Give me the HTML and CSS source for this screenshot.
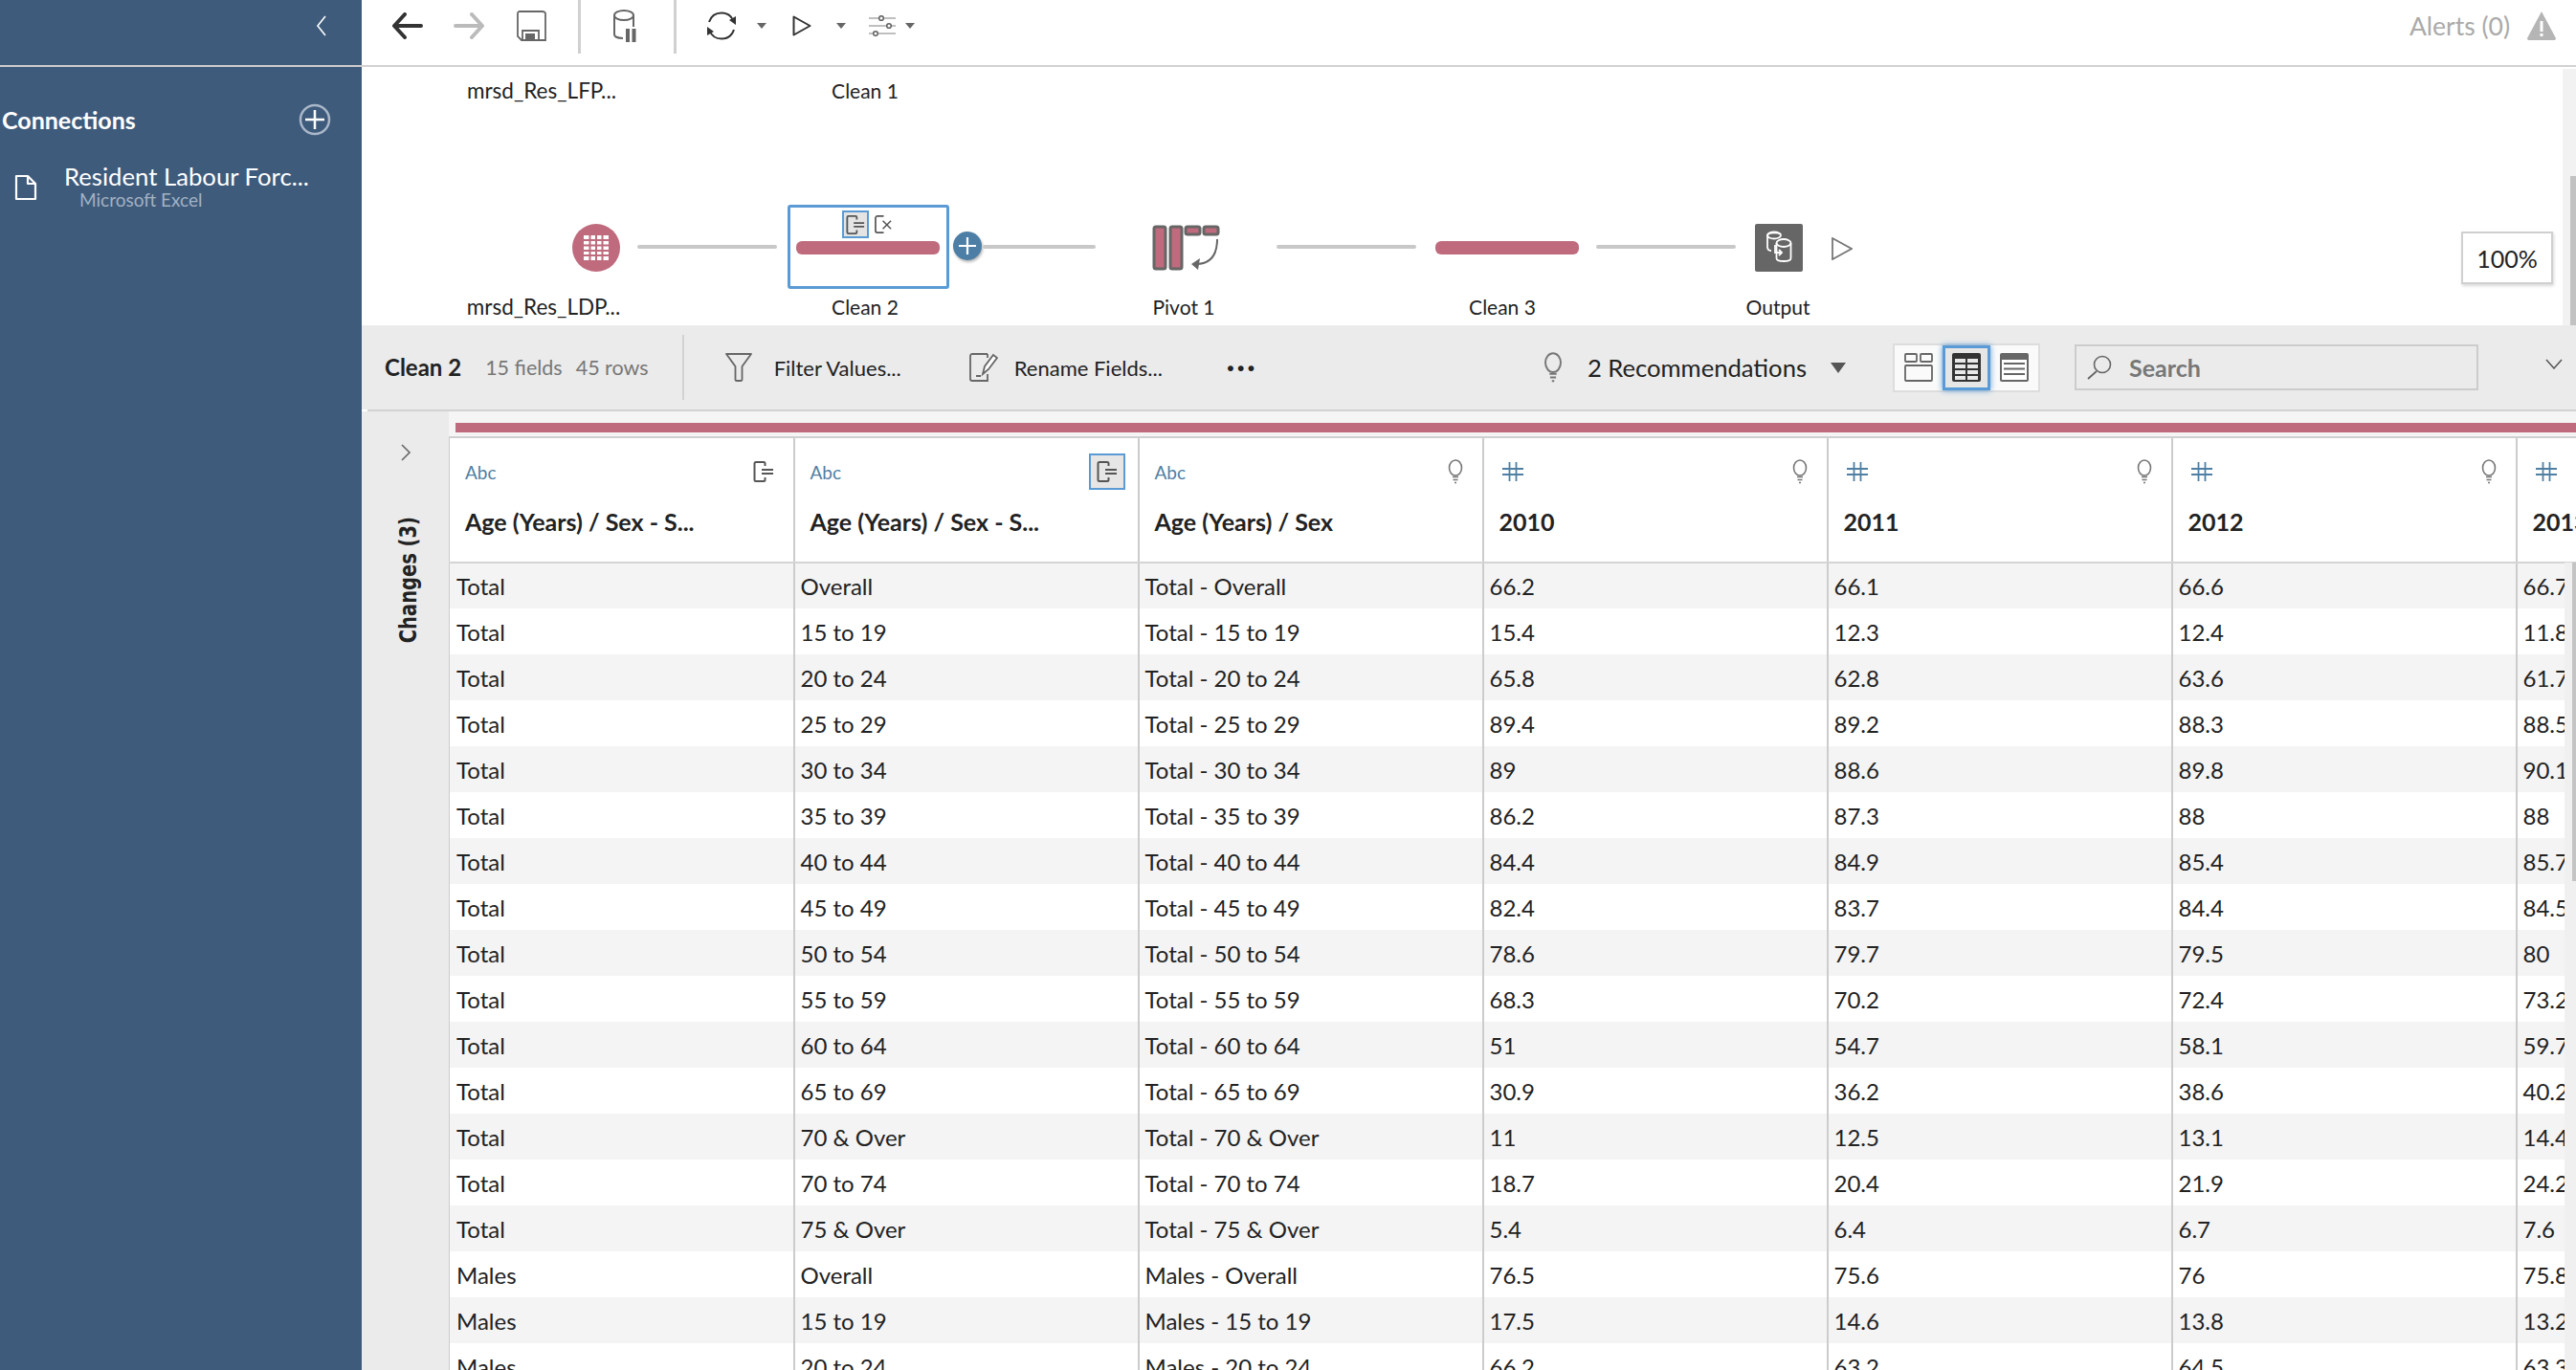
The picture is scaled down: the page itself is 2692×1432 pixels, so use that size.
FILE: index.html
```html
<!DOCTYPE html>
<html lang="en">
<head>
  <meta charset="UTF-8" />
  <title>Clean 2</title>
  <link rel="stylesheet" href="styles.css">
</head>
<body>

<svg class="defs" width="0" height="0">
  <symbol id="i-bulb" viewBox="0 0 16 26">
    <ellipse cx="8" cy="9" rx="6.500" ry="8" fill="none" stroke="#777" stroke-width="1.600"/>
    <path d="M5 18.500H11M5.500 21.500H10.500M7 24.500H9" stroke="#777" stroke-width="1.600"/>
  </symbol>
  <symbol id="i-keep" viewBox="0 0 22 22">
    <path d="M11 1H3C2 1 1.500 1.500 1.500 2.500V19.500C1.500 20.500 2 21 3 21H11C12 21 12.500 20.500 12.500 19.500V17M12.500 5V2.500C12.500 1.500 12 1 11 1" fill="none" stroke="#555" stroke-width="2"/>
    <path d="M9 9H21M9 13H21" stroke="#555" stroke-width="2"/>
  </symbol>
  <symbol id="i-hash" viewBox="0 0 22 20">
    <path d="M7.500 0V20M14.500 0V20M0 7H22M0 13H22" stroke="#4f7fa3" stroke-width="1.800"/>
  </symbol>
</svg>

<aside class="sidebar">
  <div class="side-head">
    <svg class="side-back" viewBox="0 0 12 24"><path d="M10 2L2 12L10 22" fill="none" stroke="#fff" stroke-width="1.600"/></svg>
  </div>
  <div class="conn-head">
    <span>Connections</span>
    <svg class="conn-add" viewBox="0 0 34 34"><circle cx="17" cy="17" r="15" fill="none" stroke="#a9b7c8" stroke-width="2.500"/><path d="M17 7V27M7 17H27" stroke="#fff" stroke-width="2.500"/></svg>
  </div>
  <div class="conn-row">
    <svg class="conn-file" viewBox="0 0 24 28"><path d="M2 2H14L22 10V26H2Z M14 2V10H22" fill="none" stroke="#fff" stroke-width="2.200" stroke-linejoin="round"/></svg>
    <div>
      <div class="conn-name">Resident Labour Forc...</div>
      <div class="conn-type">Microsoft Excel</div>
    </div>
  </div>
</aside>

<main class="main">
  <header class="toolbar">
    <svg class="t-back" viewBox="0 0 32 28"><path d="M30 14H3M13 2L2 14L13 26" fill="none" stroke="#333" stroke-width="4" stroke-linecap="round" stroke-linejoin="round"/></svg>
    <svg class="t-fwd" viewBox="0 0 32 28"><path d="M2 14H29M19 2L30 14L19 26" fill="none" stroke="#bbb" stroke-width="4" stroke-linecap="round" stroke-linejoin="round"/></svg>
    <svg class="t-save" viewBox="0 0 32 32"><path d="M2 3C2 2 3 1 4 1H28C29 1 31 2 31 3V31H6L2 27Z M7 31V21H24V31" fill="none" stroke="#666" stroke-width="1.800"/><rect x="10" y="24" width="10" height="7" fill="#666"/></svg>
    <span class="t-sep"></span>
    <svg class="t-data" viewBox="0 0 24 34"><ellipse cx="11" cy="6" rx="10" ry="5" fill="none" stroke="#666" stroke-width="2"/><path d="M1 6V26C1 28 4 30 10 30M21 6V18" fill="none" stroke="#666" stroke-width="2"/><rect x="13" y="20" width="4" height="14" fill="#666"/><rect x="19.500" y="20" width="4" height="14" fill="#666"/></svg>
    <span class="t-sep t-sep2"></span>
    <svg class="t-refresh" viewBox="0 0 32 30"><path d="M3 11C5 5 10 1.500 16 1.500C22 1.500 26.500 5 28.500 10M29 19C27 25 22 28.500 16 28.500C10 28.500 5.500 25 3.500 20" fill="none" stroke="#333" stroke-width="2"/><path d="M24 9L31 5V14Z M8 21L1 25V16Z" fill="#333"/></svg>
    <i class="caret t-c1"></i>
    <svg class="t-play" viewBox="0 0 20 22"><path d="M1.500 1.500L18.500 11L1.500 20.500Z" fill="none" stroke="#333" stroke-width="2" stroke-linejoin="round"/></svg>
    <i class="caret t-c2"></i>
    <svg class="t-sliders" viewBox="0 0 28 22"><path d="M0 3H28M0 11H28M0 19H28" stroke="#aaa" stroke-width="1.600"/><circle cx="13" cy="3" r="2.300" fill="#fff" stroke="#666" stroke-width="1.600"/><circle cx="21" cy="11" r="2.300" fill="#fff" stroke="#666" stroke-width="1.600"/><circle cx="7" cy="19" r="2.300" fill="#fff" stroke="#666" stroke-width="1.600"/></svg>
    <i class="caret t-c3"></i>
    <span class="alerts">Alerts (0)</span>
    <svg class="t-warn" viewBox="0 0 30 30"><path d="M15 0L30 28C30 29.500 29 30 28 30H2C1 30 0 29.500 0 28Z" fill="#b5b5b5"/><rect x="13.500" y="10" width="3" height="11" fill="#fff"/><rect x="13.500" y="23" width="3" height="3" fill="#fff"/></svg>
  </header>

  <section class="flow">
    <span class="flow-label label-lfp">mrsd_Res_LFP...</span>
    <span class="flow-label label-c1">Clean 1</span>

    <div class="node-source">
      <svg viewBox="0 0 26 26" width="26" height="26"><path d="M0 0H26V26H0Z" fill="#fff"/><path d="M6.500 0V26M13 0V26M19.500 0V26M0 5H26M0 10.500H26M0 16H26M0 21H26" stroke="#bf6b7d" stroke-width="2"/></svg>
    </div>
    <span class="link link-1"></span>
    <div class="node-selected">
      <div class="node-actions">
        <span class="action-on"><svg width="20" height="20"><use href="#i-keep"/></svg></span>
        <svg class="action-x" viewBox="0 0 20 20"><path d="M10 1H3C2 1 1 2 1 3V17C1 18 2 19 3 19H10" fill="none" stroke="#555" stroke-width="1.800"/><path d="M9 6L18 15M18 6L9 15" stroke="#555" stroke-width="1.600"/></svg>
      </div>
      <div class="pill"></div>
    </div>
    <div class="node-add"><svg viewBox="0 0 30 30"><path d="M15 6V24M6 15H24" stroke="#fff" stroke-width="2.200"/></svg></div>
    <span class="link link-2"></span>
    <svg class="node-pivot" viewBox="0 0 72 48">
      <rect x="2" y="2" width="12" height="44" rx="2" fill="#bf6b7d" stroke="#666" stroke-width="3"/>
      <rect x="19" y="2" width="12" height="44" rx="2" fill="#bf6b7d" stroke="#666" stroke-width="3"/>
      <rect x="35" y="2" width="15" height="8" rx="2" fill="#bf6b7d" stroke="#666" stroke-width="3"/>
      <rect x="54" y="2" width="15" height="8" rx="2" fill="#bf6b7d" stroke="#666" stroke-width="3"/>
      <path d="M68 15C68 32 60 40 48 41" fill="none" stroke="#666" stroke-width="2"/>
      <path d="M41 41L50 35L48 47Z" fill="#666"/>
    </svg>
    <span class="link link-3"></span>
    <div class="pill pill-3"></div>
    <span class="link link-4"></span>
    <div class="node-output">
      <svg viewBox="0 0 50 50" width="50" height="50" fill="none" stroke="#fff" stroke-width="1.800">
        <path d="M27 11C25 9 14 8 13 12V24C13 27 15 28 17 28"/>
        <ellipse cx="20" cy="12" rx="7" ry="3.500"/>
        <ellipse cx="30" cy="20" rx="7.500" ry="4"/>
        <path d="M22.500 20V36C22.500 40 37.500 40 37.500 36V20"/>
        <path d="M21 22V30H28M25 27L28 30L25 33"/>
      </svg>
    </div>
    <svg class="node-run" viewBox="0 0 22 24"><path d="M1 1L21 12L1 23Z" fill="none" stroke="#777" stroke-width="1.800"/></svg>

    <span class="flow-label flow-file label-ldp">mrsd_Res_LDP...</span>
    <span class="flow-label label-c2">Clean 2</span>
    <span class="flow-label label-pivot">Pivot 1</span>
    <span class="flow-label label-c3">Clean 3</span>
    <span class="flow-label label-out">Output</span>

    <div class="zoom-box">100%</div>
    <div class="flow-scroll"><div class="flow-thumb"></div></div>
  </section>

  <section class="profile-bar">
    <b class="step-name">Clean 2</b>
    <span class="step-meta">15 fields</span>
    <span class="step-meta step-rows">45 rows</span>
    <span class="bar-sep"></span>
    <svg class="bar-funnel" viewBox="0 0 28 30"><path d="M1 1H27L17.500 14V28C17.500 29 16.500 29 16 29H12C11.500 29 10.500 29 10.500 28V14Z" fill="none" stroke="#666" stroke-width="1.800" stroke-linejoin="round"/></svg>
    <span class="bar-link">Filter Values...</span>
    <svg class="bar-rename" viewBox="0 0 30 30"><path d="M19 1H3C2 1 1 2 1 3V27C1 28 2 29 3 29H19V22M19 5V1" fill="none" stroke="#666" stroke-width="1.800"/><path d="M14 22L16 14L25 2L29 5L20 17Z M7 24H12" fill="#fff" stroke="#666" stroke-width="1.800"/></svg>
    <span class="bar-link">Rename Fields...</span>
    <span class="bar-more">···</span>

    <svg class="bar-bulb"><use href="#i-bulb"/></svg>
    <span class="bar-recs">2 Recommendations</span>
    <i class="caret caret-big"></i>
    <div class="view-switch">
      <span class="view-btn">
        <svg width="30" height="30" viewBox="0 0 30 30" fill="none" stroke="#666" stroke-width="1.800"><rect x="1" y="1" width="12" height="8" rx="1"/><rect x="17" y="1" width="12" height="8" rx="1"/><rect x="1" y="13" width="28" height="16" rx="1"/></svg>
      </span>
      <span class="view-btn view-on">
        <svg width="30" height="30" viewBox="0 0 30 30"><rect width="30" height="30" rx="2" fill="#333"/><path d="M3 6H14V10H3Z M16 6H27V10H16Z M3 12H14V16H3Z M16 12H27V16H16Z M3 18H14V22H3Z M16 18H27V22H16Z M3 24H14V28H3Z M16 24H27V28H16Z" fill="#e8e8e8"/></svg>
      </span>
      <span class="view-btn">
        <svg width="30" height="30" viewBox="0 0 30 30"><rect width="30" height="30" rx="2" fill="#666"/><rect x="2" y="7" width="26" height="21" fill="#fff"/><path d="M4 11H26M4 16.500H26M4 22H26" stroke="#666" stroke-width="1.800"/></svg>
      </span>
    </div>
    <div class="search">
      <svg viewBox="0 0 26 26"><circle cx="16" cy="10" r="8.500" fill="none" stroke="#666" stroke-width="1.600"/><path d="M10 17L1 25" stroke="#666" stroke-width="1.800"/></svg>
      <span>Search</span>
    </div>
    <svg class="bar-collapse" viewBox="0 0 18 11"><path d="M1 1L9 10L17 1" fill="none" stroke="#555" stroke-width="1.500"/></svg>
  </section>

  <div class="bar-rule"></div>

  <section class="lower">
    <div class="changes">
      <svg class="changes-open" viewBox="0 0 12 18"><path d="M2 1L10 9L2 17" fill="none" stroke="#666" stroke-width="1.600"/></svg>
      <span class="changes-label">Changes (3)</span>
    </div>
    <div class="grid-wrap">
      <div class="step-strip"><div class="step-color"></div></div>
      <table class="grid">
        <thead>
          <tr>
            <th><div class="th-top"><span class="type">Abc</span><svg class="th-keep"><use href="#i-keep"/></svg></div><div class="th-name">Age (Years) / Sex - S...</div></th>
            <th><div class="th-top"><span class="type">Abc</span><span class="th-keep-on"><svg class="th-keep-icon"><use href="#i-keep"/></svg></span></div><div class="th-name">Age (Years) / Sex - S...</div></th>
            <th><div class="th-top"><span class="type">Abc</span><svg class="th-bulb"><use href="#i-bulb"/></svg></div><div class="th-name">Age (Years) / Sex</div></th>
            <th><div class="th-top"><svg class="th-hash"><use href="#i-hash"/></svg><svg class="th-bulb"><use href="#i-bulb"/></svg></div><div class="th-name">2010</div></th>
            <th><div class="th-top"><svg class="th-hash"><use href="#i-hash"/></svg><svg class="th-bulb"><use href="#i-bulb"/></svg></div><div class="th-name">2011</div></th>
            <th><div class="th-top"><svg class="th-hash"><use href="#i-hash"/></svg><svg class="th-bulb"><use href="#i-bulb"/></svg></div><div class="th-name">2012</div></th>
            <th><div class="th-top"><svg class="th-hash"><use href="#i-hash"/></svg></div><div class="th-name">2013</div></th>
          </tr>
        </thead>
        <tbody>
          <tr><td>Total</td><td>Overall</td><td>Total - Overall</td><td>66.2</td><td>66.1</td><td>66.6</td><td>66.7</td></tr>
          <tr><td>Total</td><td>15 to 19</td><td>Total - 15 to 19</td><td>15.4</td><td>12.3</td><td>12.4</td><td>11.8</td></tr>
          <tr><td>Total</td><td>20 to 24</td><td>Total - 20 to 24</td><td>65.8</td><td>62.8</td><td>63.6</td><td>61.7</td></tr>
          <tr><td>Total</td><td>25 to 29</td><td>Total - 25 to 29</td><td>89.4</td><td>89.2</td><td>88.3</td><td>88.5</td></tr>
          <tr><td>Total</td><td>30 to 34</td><td>Total - 30 to 34</td><td>89</td><td>88.6</td><td>89.8</td><td>90.1</td></tr>
          <tr><td>Total</td><td>35 to 39</td><td>Total - 35 to 39</td><td>86.2</td><td>87.3</td><td>88</td><td>88</td></tr>
          <tr><td>Total</td><td>40 to 44</td><td>Total - 40 to 44</td><td>84.4</td><td>84.9</td><td>85.4</td><td>85.7</td></tr>
          <tr><td>Total</td><td>45 to 49</td><td>Total - 45 to 49</td><td>82.4</td><td>83.7</td><td>84.4</td><td>84.5</td></tr>
          <tr><td>Total</td><td>50 to 54</td><td>Total - 50 to 54</td><td>78.6</td><td>79.7</td><td>79.5</td><td>80</td></tr>
          <tr><td>Total</td><td>55 to 59</td><td>Total - 55 to 59</td><td>68.3</td><td>70.2</td><td>72.4</td><td>73.2</td></tr>
          <tr><td>Total</td><td>60 to 64</td><td>Total - 60 to 64</td><td>51</td><td>54.7</td><td>58.1</td><td>59.7</td></tr>
          <tr><td>Total</td><td>65 to 69</td><td>Total - 65 to 69</td><td>30.9</td><td>36.2</td><td>38.6</td><td>40.2</td></tr>
          <tr><td>Total</td><td>70 &amp; Over</td><td>Total - 70 &amp; Over</td><td>11</td><td>12.5</td><td>13.1</td><td>14.4</td></tr>
          <tr><td>Total</td><td>70 to 74</td><td>Total - 70 to 74</td><td>18.7</td><td>20.4</td><td>21.9</td><td>24.2</td></tr>
          <tr><td>Total</td><td>75 &amp; Over</td><td>Total - 75 &amp; Over</td><td>5.4</td><td>6.4</td><td>6.7</td><td>7.6</td></tr>
          <tr><td>Males</td><td>Overall</td><td>Males - Overall</td><td>76.5</td><td>75.6</td><td>76</td><td>75.8</td></tr>
          <tr><td>Males</td><td>15 to 19</td><td>Males - 15 to 19</td><td>17.5</td><td>14.6</td><td>13.8</td><td>13.2</td></tr>
          <tr><td>Males</td><td>20 to 24</td><td>Males - 20 to 24</td><td>66.2</td><td>63.2</td><td>64.5</td><td>63.3</td></tr>
        </tbody>
      </table>
      <div class="grid-scroll"><div class="grid-thumb"></div></div>
    </div>
  </section>
</main>

</body>
</html>
```

FILE: styles.css
```css
* {
  box-sizing: border-box;
}

body {
  margin: 0;
  display: flex;
  width: 2692px;
  height: 1432px;
  overflow: hidden;
  font-family: "Lato", sans-serif;
  font-size: 24px;
  color: #222;
  background-color: #fff;
}

svg {
  display: block;
  flex: none;
}

.defs {
  position: absolute;
}

/* sidebar */
.sidebar {
  width: 378px;
  flex: none;
  background-color: #3e5b7c;
  color: white;
}

.side-head {
  height: 70px;
  border-bottom: 2px solid #ccc;
  display: flex;
  align-items: center;
  justify-content: flex-end;
  padding: 0 36px 14px 0;
}

.side-back {
  width: 12px;
  height: 24px;
}

.conn-head {
  display: flex;
  align-items: center;
  justify-content: space-between;
  padding: 38px 32px 0 2px;
  font-size: 25px;
  font-weight: 700;
}

.conn-add {
  width: 34px;
  height: 34px;
}

.conn-row {
  display: flex;
  align-items: center;
  gap: 28px;
  padding: 27px 0 0 15px;
}

.conn-file {
  width: 24px;
  height: 28px;
  margin-top: 4px;
}

.conn-name {
  font-size: 25.700px;
  line-height: 30px;
}

.conn-type {
  font-size: 19px;
  line-height: 20px;
  margin-left: 16px;
  color: #a3b1c2;
}

/* right side */
.main {
  width: 2314px;
  display: flex;
  flex-direction: column;
}

.toolbar {
  height: 70px;
  flex: none;
  border-bottom: 2px solid #d2d2d2;
  display: flex;
  align-items: center;
  padding: 0 21px 14px 32px;
}

.t-back { width: 32px; height: 28px; }
.t-fwd { width: 32px; height: 28px; margin-left: 32px; }
.t-save { width: 32px; height: 32px; margin-left: 33px; }
.t-data { width: 24px; height: 34px; margin-left: 34px; }
.t-refresh { width: 32px; height: 30px; margin-left: 31px; }
.t-play { width: 20px; height: 22px; margin-left: 27px; }
.t-sliders { width: 28px; height: 22px; margin-left: 24px; }
.t-c1 { margin-left: 21px; }
.t-c2 { margin-left: 26px; }
.t-c3 { margin-left: 10px; }

.t-sep {
  width: 3px;
  height: 56px;
  margin-left: 33px;
  background-color: #d0d0d0;
  align-self: flex-start;
}

.t-sep2 {
  margin-left: 39px;
}

.caret {
  display: block;
  flex: none;
  width: 0;
  height: 0;
  border-left: 5px solid transparent;
  border-right: 5px solid transparent;
  border-top: 6px solid #666;
}

.alerts {
  margin-left: auto;
  font-size: 26.500px;
  color: #aaa;
}

.t-warn {
  width: 30px;
  height: 30px;
  margin-left: 18px;
}

/* flow canvas, nodes sit where the diagram puts them */
.flow {
  position: relative;
  height: 270px;
  flex: none;
}

.flow-label {
  position: absolute;
  transform: translateX(-50%);
  font-size: 21px;
  line-height: 26px;
  white-space: nowrap;
}

.label-lfp,
.flow-file {
  font-size: 22.500px;
}

.label-lfp { left: 188px; top: 12px; }
.label-c1 { left: 526px; top: 12px; }
.label-ldp { left: 190px; top: 238px; }
.label-c2 { left: 526px; top: 238px; }
.label-pivot { left: 859px; top: 238px; }
.label-c3 { left: 1192px; top: 238px; }
.label-out { left: 1480px; top: 238px; }

.node-source {
  position: absolute;
  left: 220px;
  top: 164px;
  width: 50px;
  height: 50px;
  border-radius: 50%;
  background-color: #bf6b7d;
  display: flex;
  align-items: center;
  justify-content: center;
}

.link {
  position: absolute;
  top: 186px;
  width: 146px;
  height: 4px;
  border-radius: 2px;
  background-color: #c8c8c8;
}

.link-1 { left: 288px; }
.link-2 { left: 649px; width: 118px; }
.link-3 { left: 956px; }
.link-4 { left: 1290px; }

.node-selected {
  position: absolute;
  left: 445px;
  top: 144px;
  width: 169px;
  height: 88px;
  border: 3px solid #5b9bd5;
  border-radius: 3px;
  padding: 3px 6px 0;
}

.node-actions {
  display: flex;
  align-items: center;
  justify-content: center;
  gap: 6px;
  height: 29px;
  margin: 0 3px 3px 0;
}

.action-on {
  width: 28px;
  height: 29px;
  background-color: #e4e4e4;
  border: 2px solid #5b9bd5;
  display: flex;
  align-items: center;
  justify-content: center;
}

.action-x {
  width: 19px;
  height: 19px;
}

.pill {
  width: 150px;
  height: 14px;
  border-radius: 6px;
  background-color: #bf6b7d;
}

.pill-3 {
  position: absolute;
  left: 1122px;
  top: 182px;
}

.node-add {
  position: absolute;
  left: 618px;
  top: 172px;
  width: 30px;
  height: 30px;
  border-radius: 50%;
  background-color: #4d7fa6;
  box-shadow: 1px 2px 3px rgba(0, 0, 0, 0.3);
}

.node-pivot {
  position: absolute;
  left: 826px;
  top: 165px;
  width: 72px;
  height: 48px;
}

.node-output {
  position: absolute;
  left: 1456px;
  top: 164px;
  width: 50px;
  height: 50px;
  border-radius: 2px;
  background-color: #666;
}

.node-run {
  position: absolute;
  left: 1536px;
  top: 178px;
  width: 22px;
  height: 24px;
}

.zoom-box {
  position: absolute;
  left: 2194px;
  top: 172px;
  width: 96px;
  height: 55px;
  border: 2px solid #d0d0d0;
  background-color: #fff;
  box-shadow: 1px 2px 3px rgba(0, 0, 0, 0.15);
  display: flex;
  align-items: center;
  justify-content: center;
  font-size: 25px;
}

.flow-scroll {
  position: absolute;
  right: 0;
  top: 2px;
  bottom: 0;
  width: 14px;
  background-color: #f2f2f2;
  display: flex;
  justify-content: flex-end;
  align-items: flex-end;
}

.flow-thumb {
  width: 6px;
  height: 156px;
  background-color: #c2c2c2;
}

/* bar above the grid */
.profile-bar {
  height: 88px;
  flex: none;
  background-color: #ebebeb;
  display: flex;
  align-items: center;
  padding: 0 14px 0 24px;
}

.step-name {
  font-weight: 700;
  margin-top: -2px;
}

.step-meta {
  margin-left: 25px;
  font-size: 21.500px;
  color: #777;
}

.step-rows {
  margin-left: 14px;
}

.bar-sep {
  width: 2px;
  height: 68px;
  margin-left: 35px;
  background-color: #d2d2d2;
}

.bar-funnel {
  width: 28px;
  height: 30px;
  margin-left: 43px;
}

.bar-link {
  margin-left: 23px;
  font-size: 22px;
}

.bar-rename {
  width: 30px;
  height: 30px;
  margin-left: 71px;
}

.bar-rename + .bar-link {
  margin-left: 17px;
}

.bar-more {
  margin-left: 67px;
  margin-top: -3px;
  font-weight: 900;
  font-size: 28px;
  letter-spacing: 3px;
}

.bar-bulb {
  width: 24px;
  height: 32px;
  margin-left: auto;
}

.bar-recs {
  margin-left: 24px;
  font-size: 25.600px;
}

.caret-big {
  margin-left: 25px;
  border-left-width: 8px;
  border-right-width: 8px;
  border-top: 11px solid #555;
}

.view-switch {
  display: flex;
  margin-left: 49px;
  width: 154px;
  height: 51px;
  border: 2px solid #ddd;
  background-color: #fafafa;
}

.view-btn {
  width: 50px;
  display: flex;
  align-items: center;
  justify-content: center;
}

.view-on {
  background-color: #e6e6e6;
  border: 3px solid #5b9bd5;
  box-shadow: 0 0 6px #5b9bd5;
}

.search {
  display: flex;
  align-items: center;
  gap: 18px;
  margin-left: 36px;
  width: 422px;
  height: 48px;
  padding-left: 11px;
  border: 2px solid #ccc;
  font-size: 25px;
  font-weight: 700;
  color: #777;
}

.search svg {
  width: 26px;
  height: 26px;
}

.bar-collapse {
  width: 18px;
  height: 11px;
  margin: -8px 0 0 70px;
}

.bar-rule {
  height: 2px;
  flex: none;
  margin-left: 6px;
  background-color: #d2d2d2;
}

/* lower part */
.lower {
  flex: 1;
  display: flex;
  min-height: 0;
  background-color: #ebebeb;
}

.changes {
  width: 91px;
  flex: none;
  padding-top: 34px;
  display: flex;
  flex-direction: column;
  align-items: center;
  gap: 58px;
}

.changes-open {
  width: 12px;
  height: 18px;
}

.changes-label {
  writing-mode: vertical-rl;
  transform: rotate(180deg) scaleX(1.250);
  margin-left: 6px;
  font-family: "DejaVu Sans", sans-serif;
  font-weight: 700;
  font-size: 19.500px;
}

.grid-wrap {
  position: relative;
  flex: 1;
  overflow: hidden;
  background-color: #fff;
}

.step-strip {
  height: 28px;
  padding-top: 12px;
  padding-left: 7px;
  background-color: #f5f5f5;
  border-bottom: 2px solid #d0d0d0;
}

.step-color {
  height: 10px;
  background-color: #bf6b7d;
}

.grid {
  width: 2521px;
  table-layout: fixed;
  border-collapse: collapse;
  border-left: 1px solid #ccc;
  font-size: 24px;
}

.grid th,
.grid td {
  width: 360px;
  padding: 0 7px 0 6px;
  border-right: 2px solid #ccc;
  text-align: left;
  white-space: nowrap;
  overflow: hidden;
}

.grid td:first-child {
  padding-left: 7px;
}

.grid th {
  height: 130px;
  padding: 0 17px 0 16px;
  border-bottom: 2px solid #d4d4d4;
  vertical-align: top;
  font-size: 25px;
  font-weight: 700;
}

.grid td {
  height: 48px;
}

.grid tbody tr:nth-child(odd) {
  background-color: #f4f4f4;
}

.th-top {
  height: 46px;
  margin-top: 12px;
  display: flex;
  justify-content: space-between;
  align-items: center;
}

.th-name {
  margin-top: 13px;
  line-height: 32px;
}

.type {
  font-size: 19px;
  font-weight: 400;
  color: #4f7fa3;
}

.th-keep {
  width: 22px;
  height: 22px;
  margin-right: 3px;
}

.th-keep-icon {
  width: 22px;
  height: 22px;
}

.th-keep-on {
  width: 38px;
  height: 38px;
  margin-right: -4px;
  border: 2px solid #5b9bd5;
  background-color: #e6e6e6;
  display: flex;
  align-items: center;
  justify-content: center;
}

.th-bulb {
  width: 16px;
  height: 26px;
  margin-right: 3px;
}

.th-hash {
  width: 22px;
  height: 20px;
  margin-left: 3px;
}

.grid-scroll {
  position: absolute;
  right: 0;
  top: 158px;
  bottom: 0;
  width: 12px;
  background-color: #f0f0f0;
  display: flex;
  justify-content: flex-end;
}

.grid-thumb {
  width: 4px;
  height: 333px;
  background-color: #c4c4c4;
}
```
